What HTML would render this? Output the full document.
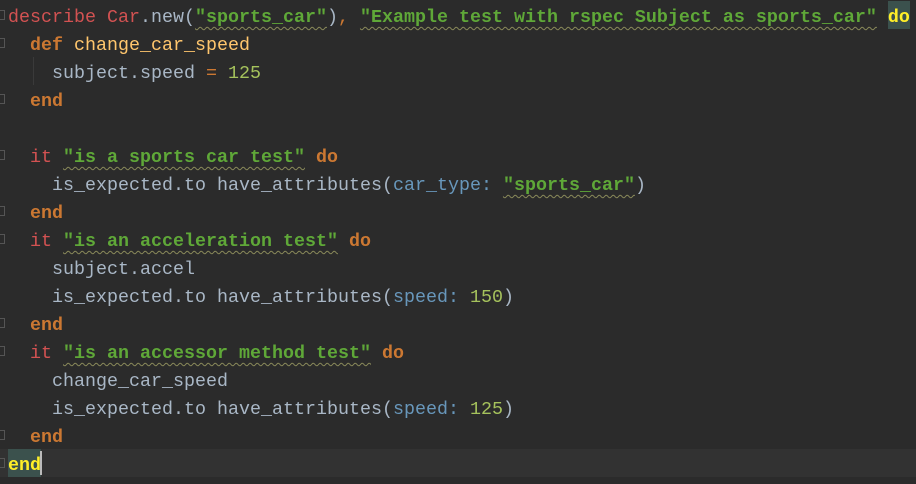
<!DOCTYPE html>
<html><head><style>
html,body{margin:0;padding:0;background:#2b2b2b;width:916px;height:484px;overflow:hidden}
.ed{position:absolute;left:0;top:0;width:916px;height:484px}
.l{position:absolute;left:8px;height:28px;line-height:28px;margin-top:3px;font-family:"Liberation Mono",monospace;font-size:18.33px;color:#a9b7c6;white-space:pre}
.k{color:#cc7832;font-weight:bold}
.r{color:#d25252}
.s{color:#5fa838;font-weight:bold;text-decoration:underline wavy #8a8a5a;text-decoration-thickness:1px;text-underline-offset:4px}
.n{color:#a5c25c}
.y{color:#ffc66d}
.sym{color:#6897bb}
.cur{position:absolute;left:0;top:449px;width:916px;height:28px;background:#323232}
.g{position:absolute;left:0;width:5px;height:10px;border:1px solid #555;border-left:none;box-sizing:border-box}
</style></head><body><div class="ed">
<div class="cur"></div>
<div style="position:absolute;left:8px;top:449px;width:33px;height:28px;background:#3b514d"></div>
<div style="position:absolute;left:40px;top:451px;width:2px;height:24px;background:#bbb"></div>
<div style="position:absolute;left:888px;top:1px;width:22px;height:28px;background:#3b514d"></div>
<div style="position:absolute;left:33px;top:57px;width:1px;height:28px;background:#3a3a3a"></div>
<div class="g" style="top:10px"></div><div class="g" style="top:38px"></div><div class="g" style="top:94px"></div>
<div class="g" style="top:150px"></div><div class="g" style="top:206px"></div><div class="g" style="top:234px"></div>
<div class="g" style="top:318px"></div><div class="g" style="top:346px"></div><div class="g" style="top:430px"></div><div class="g" style="top:458px"></div>
<div class="l" style="top:1px"><span class="r">describe Car</span>.new(<span class="s">"sports_car"</span>)<span class="k" style="font-weight:normal">, </span><span class="s">"Example test with rspec Subject as sports_car"</span> <span style="color:#ffef28;font-weight:bold">do</span></div>
<div class="l" style="top:29px">  <span class="k">def</span> <span class="y">change_car_speed</span></div>
<div class="l" style="top:57px">    subject.speed <span class="k" style="font-weight:normal">=</span> <span class="n">125</span></div>
<div class="l" style="top:85px">  <span class="k">end</span></div>
<div class="l" style="top:141px">  <span class="r">it</span> <span class="s">"is a sports car test"</span> <span class="k">do</span></div>
<div class="l" style="top:169px">    is_expected.to have_attributes(<span class="sym">car_type:</span> <span class="s">"sports_car"</span>)</div>
<div class="l" style="top:197px">  <span class="k">end</span></div>
<div class="l" style="top:225px">  <span class="r">it</span> <span class="s">"is an acceleration test"</span> <span class="k">do</span></div>
<div class="l" style="top:253px">    subject.accel</div>
<div class="l" style="top:281px">    is_expected.to have_attributes(<span class="sym">speed:</span> <span class="n">150</span>)</div>
<div class="l" style="top:309px">  <span class="k">end</span></div>
<div class="l" style="top:337px">  <span class="r">it</span> <span class="s">"is an accessor method test"</span> <span class="k">do</span></div>
<div class="l" style="top:365px">    change_car_speed</div>
<div class="l" style="top:393px">    is_expected.to have_attributes(<span class="sym">speed:</span> <span class="n">125</span>)</div>
<div class="l" style="top:421px">  <span class="k">end</span></div>
<div class="l" style="top:449px"><span style="color:#ffef28;font-weight:bold">end</span></div>
</div></body></html>
